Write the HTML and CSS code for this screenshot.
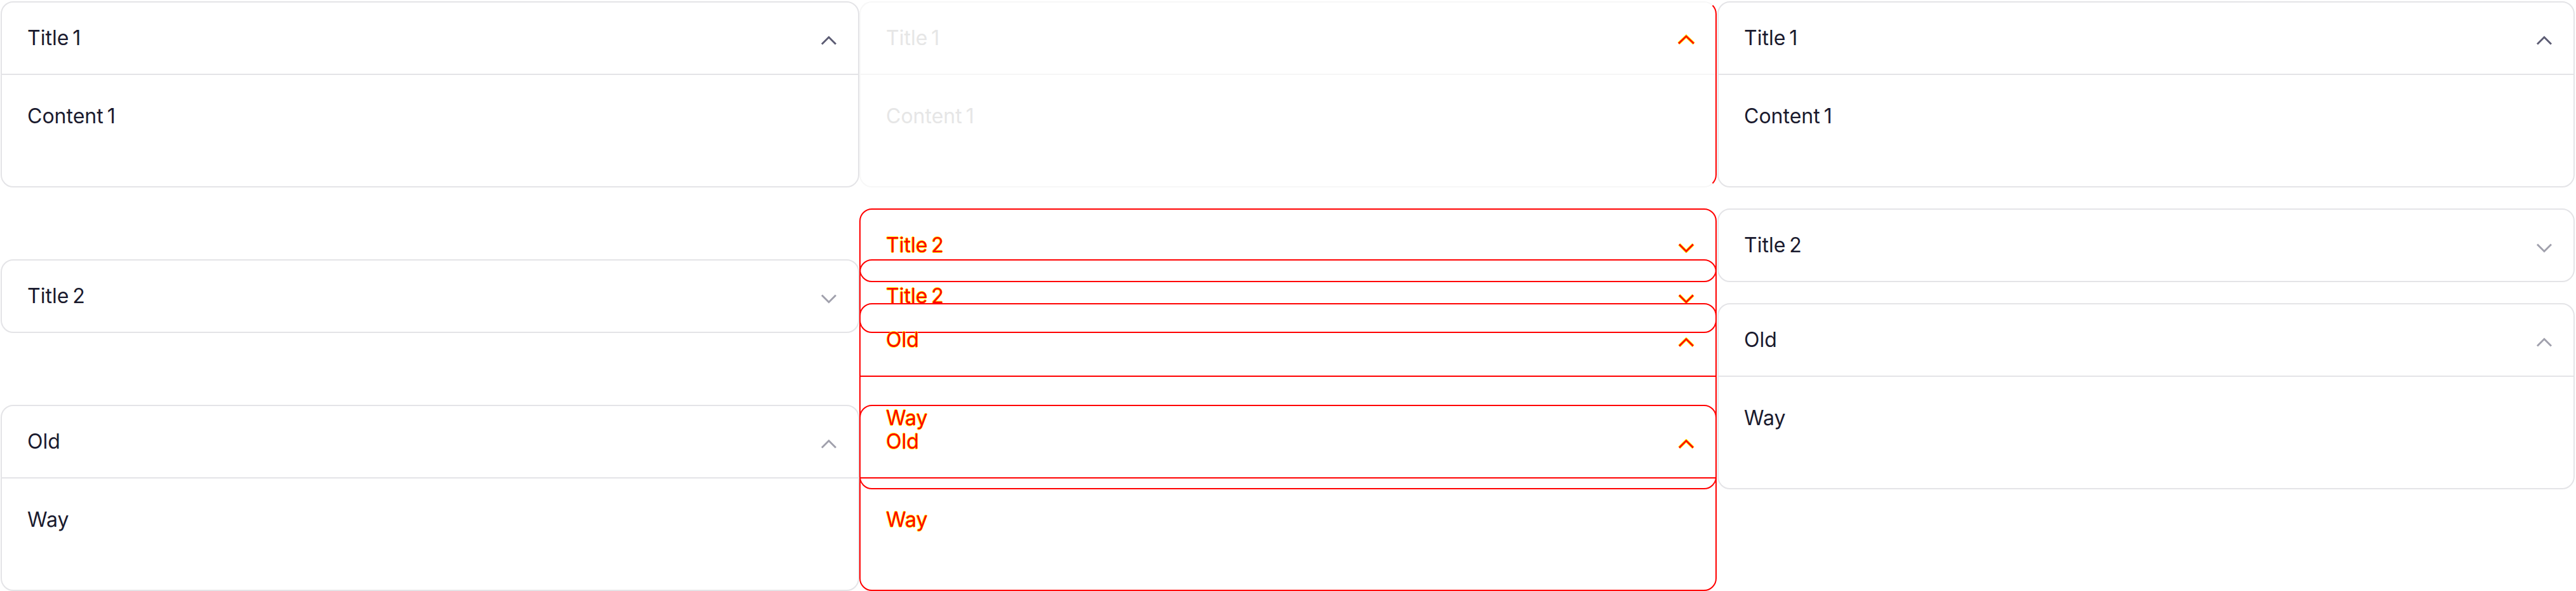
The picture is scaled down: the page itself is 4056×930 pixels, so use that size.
FILE: index.html
```html
<!DOCTYPE html>
<html lang="en">
<head>
<meta charset="utf-8">
<title>Accordion diff</title>
<link rel="stylesheet" href="styles.css">
</head>
<body>
<div class="panels">

  <section class="panel">
    <div class="stack stack-before">
      <div class="acc">
        <div class="acc-head"><span class="acc-title">Title 1</span><svg class="chev chev-strong" viewBox="0 0 26 16" width="26" height="16"><polyline points="2,13.5 13,2.5 24,13.5"/></svg></div>
        <div class="acc-body">Content 1</div>
      </div>
      <div class="acc">
        <div class="acc-head"><span class="acc-title">Title 2</span><svg class="chev" viewBox="0 0 26 16" width="26" height="16"><polyline points="2,2.5 13,13.5 24,2.5"/></svg></div>
      </div>
      <div class="acc">
        <div class="acc-head"><span class="acc-title">Old</span><svg class="chev" viewBox="0 0 26 16" width="26" height="16"><polyline points="2,13.5 13,2.5 24,13.5"/></svg></div>
        <div class="acc-body">Way</div>
      </div>
    </div>
  </section>

  <section class="panel panel-diff">
    <div class="stack stack-before layer">
      <div class="acc d-fade">
        <div class="acc-head"><span class="acc-title">Title 1</span><svg class="chev d-chev" viewBox="0 0 30 18" width="30" height="18"><polyline class="hl" points="3,14.5 15,3 27,14.5"/><polyline points="3,14.5 15,3 27,14.5"/></svg></div>
        <div class="acc-body">Content 1</div>
      </div>
      <div class="acc d-red">
        <div class="acc-head"><span class="acc-title">Title 2</span><svg class="chev d-chev" viewBox="0 0 26 16" width="26" height="16"><polyline class="hl" points="2,2.5 13,13.5 24,2.5"/><polyline points="2,2.5 13,13.5 24,2.5"/></svg></div>
      </div>
      <div class="acc d-red">
        <div class="acc-head"><span class="acc-title">Old</span><svg class="chev d-chev" viewBox="0 0 26 16" width="26" height="16"><polyline class="hl" points="2,13.5 13,2.5 24,13.5"/><polyline points="2,13.5 13,2.5 24,13.5"/></svg></div>
        <div class="acc-body">Way</div>
      </div>
    </div>
    <div class="stack stack-after layer">
      <div class="acc d-ghost">
        <div class="acc-head"><span class="acc-title">Title 1</span></div>
        <div class="acc-body">Content 1</div>
      </div>
      <div class="acc d-red">
        <div class="acc-head"><span class="acc-title">Title 2</span><svg class="chev d-chev" viewBox="0 0 26 16" width="26" height="16"><polyline class="hl" points="2,2.5 13,13.5 24,2.5"/><polyline points="2,2.5 13,13.5 24,2.5"/></svg></div>
      </div>
      <div class="acc d-red">
        <div class="acc-head"><span class="acc-title">Old</span><svg class="chev d-chev" viewBox="0 0 26 16" width="26" height="16"><polyline class="hl" points="2,13.5 13,2.5 24,13.5"/><polyline points="2,13.5 13,2.5 24,13.5"/></svg></div>
        <div class="acc-body">Way</div>
      </div>
    </div>
  </section>

  <section class="panel">
    <div class="stack stack-after">
      <div class="acc">
        <div class="acc-head"><span class="acc-title">Title 1</span><svg class="chev chev-strong" viewBox="0 0 26 16" width="26" height="16"><polyline points="2,13.5 13,2.5 24,13.5"/></svg></div>
        <div class="acc-body">Content 1</div>
      </div>
      <div class="acc">
        <div class="acc-head"><span class="acc-title">Title 2</span><svg class="chev" viewBox="0 0 26 16" width="26" height="16"><polyline points="2,2.5 13,13.5 24,2.5"/></svg></div>
      </div>
      <div class="acc">
        <div class="acc-head"><span class="acc-title">Old</span><svg class="chev" viewBox="0 0 26 16" width="26" height="16"><polyline points="2,13.5 13,2.5 24,13.5"/></svg></div>
        <div class="acc-body">Way</div>
      </div>
    </div>
  </section>

</div>
</body>
</html>
```

FILE: styles.css
```css
* { box-sizing: border-box; }

html, body {
  margin: 0;
  padding: 0;
  background: #ffffff;
}

body {
  width: 4056px;
  height: 930px;
  overflow: hidden;
  font-family: Inter, "Noto Sans", "Liberation Sans", sans-serif;
  color: #1a1a2e;
}

.panels {
  display: grid;
  grid-template-columns: 1352px 1351px 1353px;
  align-items: start;
}

.panel {
  padding-top: 2px;
}

.panel-diff {
  display: grid;
}

.layer {
  grid-area: 1 / 1;
}

.stack {
  display: flex;
  flex-direction: column;
  align-items: flex-start;
}

.stack-before {
  gap: 113px;
  padding-left: 1px;
}

.stack-before .acc { width: 1352px; }

.stack-after {
  gap: 33px;
  padding-left: 1px;
}

.stack-after .acc { width: 1350px; }

.acc {
  border: 2px solid #e4e4e7;
  border-radius: 20px;
  background: #ffffff;
}

.acc-head {
  height: 112px;
  display: flex;
  align-items: center;
  justify-content: space-between;
  padding: 0 33px 0 40px;
}

.acc-title,
.acc-body {
  font-size: 32px;
  line-height: 48px;
  font-weight: 400;
  word-spacing: -3px;
}

.acc-body {
  border-top: 2px solid #e4e4e7;
  padding: 41px 40px 86px;
}

.chev {
  margin-top: 8px;
  fill: none;
  stroke: #a1a1ad;
  stroke-width: 3;
  stroke-linecap: butt;
  stroke-linejoin: miter;
}

.chev-strong {
  stroke: #5d5d74;
}

/* ---------- diff panel ---------- */

.panel-diff .acc { width: 1350px; }

.d-fade {
  background: transparent;
  border-color: #f7f7f7;
  border-right-color: #ff0000;
  color: #e6e6e6;
}

.d-fade .acc-body {
  border-top-color: #f6f6f6;
}

.d-red {
  background: transparent;
  border-color: #ff0000;
  color: #ff0000;
}

.d-red .acc-title,
.d-red .acc-body {
  text-shadow: 0.8px 0 0 #ffee00, -0.8px 0 0 #ffee00, 0 0.8px 0 #ffee00, 0 -0.8px 0 #ffee00;
}

.d-red .acc-body {
  border-top-color: #ff0000;
}

.d-ghost {
  visibility: hidden;
  background: transparent;
}

.d-chev {
  stroke: #ff0000;
  stroke-width: 2.6;
}

.d-chev .hl {
  stroke: #ffee00;
  stroke-width: 4.6;
}

.d-fade .d-chev {
  margin-top: 6px;
  margin-right: -2px;
}
```
